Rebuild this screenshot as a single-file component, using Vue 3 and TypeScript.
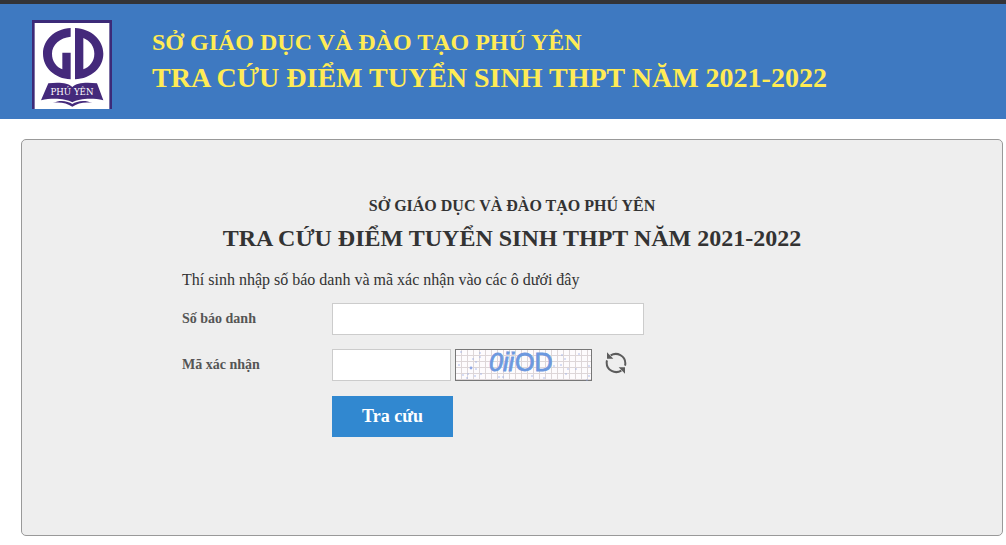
<script setup lang="ts">
import { ref } from 'vue'

const department = 'SỞ GIÁO DỤC VÀ ĐÀO TẠO PHÚ YÊN'
const title = 'TRA CỨU ĐIỂM TUYỂN SINH THPT NĂM 2021-2022'
const candidate = ref('')
const code = ref('')

interface Dot { x: number; y: number; r: number }

const dots: Dot[] = [
  [6, 3, 1], [25, 4, 1], [4, 16, 1], [18, 10, 1], [21, 13, 1], [16, 19, 2], [21, 20, 1],
  [25, 8, 1], [13, 25, 1], [12, 29, 1], [8, 26, 1], [20, 27, 1], [26, 25, 1], [48, 28, 1],
  [44, 28, 1], [52, 3, 1], [57, 3, 1], [43, 20, 1], [77, 27, 1], [89, 29, 1], [107, 6, 1],
  [110, 10, 1], [99, 17, 1], [106, 16, 1], [111, 25, 1], [124, 5, 1], [121, 20, 1],
  [134, 17, 1], [134, 27, 1], [132, 31, 1], [113, 20, 1],
].map(([x, y, r]) => ({ x, y, r }))
</script>

<template>
  <div class="page">
    <header class="banner">
      <svg class="logo" viewBox="0 0 240 267" role="img" aria-label="GD Phú Yên">
        <rect width="240" height="267" fill="#3c2a78" />
        <rect x="8" y="9" width="224" height="258" fill="#fff" />
        <g fill="#44297b">
          <path d="M116 24C68 27 33 59 33 101C33 143 68 175 116 178V98H91V148C72 140 60 123 60 101C60 74 84 53 116 50Z" />
          <path fill-rule="evenodd" d="M129 24C178 27 214 59 214 101C214 143 178 175 129 178ZM154 54V148C174 140 187 123 187 101C187 79 174 62 154 54Z" />
          <path d="M49 190C80 186 108 188 121 201C134 188 162 186 195 190L214 241C180 233 140 236 121 247C102 236 62 233 27 241Z" />
          <path d="M63 249C84 238 108 243 121 252C134 243 158 238 181 249C158 245 137 250 121 260C105 250 84 245 63 249Z" />
        </g>
        <text x="120" y="225" text-anchor="middle" class="logo-text">PHÚ YÊN</text>
      </svg>
      <div class="banner-text">
        <p class="banner-department">{{ department }}</p>
        <p class="banner-title">{{ title }}</p>
      </div>
    </header>

    <main class="panel">
      <h2>{{ department }}</h2>
      <h1>{{ title }}</h1>
      <form class="lookup" @submit.prevent>
        <p class="hint">Thí sinh nhập số báo danh và mã xác nhận vào các ô dưới đây</p>
        <div class="row">
          <label for="candidate">Số báo danh</label>
          <input id="candidate" v-model="candidate" class="wide" type="text" />
        </div>
        <div class="row">
          <label for="code">Mã xác nhận</label>
          <input id="code" v-model="code" class="short" type="text" />
          <svg class="captcha" viewBox="0 0 137 32" role="img" aria-label="Mã xác nhận">
            <defs>
              <pattern id="grid" x="1" y="1" width="6" height="6" patternUnits="userSpaceOnUse">
                <rect width="6" height="6" fill="#fdfbfd" />
                <path d="M5.5 0V6M0 5.5H6" stroke="#ddd6d8" />
              </pattern>
            </defs>
            <rect x="0.5" y="0.5" width="136" height="31" fill="url(#grid)" stroke="#777" />
            <circle v-for="(d, i) in dots" :key="i" :cx="d.x" :cy="d.y" :r="d.r * 0.7" fill="#92a9e6" />
            <g class="captcha-text">
              <text x="34" y="22" font-style="italic">0ii</text>
              <text x="60" y="22">OD</text>
            </g>
          </svg>
          <button class="refresh" type="button" aria-label="Đổi mã xác nhận">
            <svg viewBox="0 0 66 66" fill="none" stroke="#5c5c5c" stroke-width="6">
              <path d="M17 10C36 -1 61 11 61 34C61 36 61 38 60 41" />
              <path d="M49 56C30 67 5 55 5 32C5 30 5 28 6 25" />
              <path d="M6 1L25 20H6Z" fill="#5c5c5c" stroke="none" />
              <path d="M60 65L41 46H60Z" fill="#5c5c5c" stroke="none" />
            </svg>
          </button>
        </div>
        <button class="submit" type="submit">Tra cứu</button>
      </form>
    </main>
  </div>
</template>

<style>
body {
  margin: 0;
  background: #fff;
}
</style>

<style scoped>
.page {
  font-family: "Liberation Serif", "Times New Roman", serif;
  color: #333;
}
.banner {
  display: flex;
  gap: 40px;
  padding: 16px 32px 10px;
  border-top: 4px solid #333438;
  background: #3e79c1;
  color: #ffeb55;
  font-weight: bold;
}
.logo {
  display: block;
  flex: none;
  width: 80px;
  height: 89px;
}
.logo-text {
  fill: #fff;
  font-family: "DejaVu Serif", serif;
  font-size: 26px;
  font-weight: normal;
}
.banner-text {
  padding-top: 4px;
}
.banner-text p {
  margin: 0;
}
.banner-department {
  font-size: 24px;
  line-height: 36px;
}
.banner-title {
  font-size: 28px;
  line-height: 36px;
}
.panel {
  margin: 20px 3px 9px 21px;
  padding: 56px 0 98px;
  border: 1px solid #999;
  border-radius: 5px;
  background: #eee;
}
h1,
h2 {
  margin: 0;
  text-align: center;
}
h2 {
  font-size: 16px;
  line-height: 20px;
}
h1 {
  margin-top: 8px;
  font-size: 24px;
  line-height: 28px;
}
.lookup {
  padding: 18px 160px 0;
}
.hint {
  margin: 0 0 13px;
  font-size: 16px;
  line-height: 20px;
}
.row {
  display: flex;
  align-items: center;
  margin-bottom: 14px;
}
label {
  flex: none;
  width: 150px;
  color: #555;
  font-size: 14px;
  line-height: 20px;
  font-weight: bold;
}
input {
  box-sizing: border-box;
  height: 32px;
  padding: 4px 8px;
  border: 1px solid #ccc;
  background: #fff;
  font: inherit;
}
.wide {
  width: 312px;
}
.short {
  width: 119px;
}
.captcha {
  flex: none;
  width: 137px;
  height: 32px;
  margin-left: 4px;
}
.captcha-text {
  fill: #6c98df;
  stroke: #6c98df;
  stroke-width: 0.8;
  font-family: "Liberation Sans", Arial, sans-serif;
  font-size: 25px;
}
.refresh {
  align-self: flex-start;
  width: 22px;
  height: 22px;
  margin: 3px 0 0 13px;
  padding: 0;
  border: 0;
  background: none;
  cursor: pointer;
}
.refresh svg {
  display: block;
  width: 100%;
  height: 100%;
}
.submit {
  display: block;
  margin: 15px 0 0 150px;
  padding: 0 30px;
  border: 0;
  background: #3188d0;
  color: #fff;
  font-family: inherit;
  font-size: 18px;
  font-weight: bold;
  line-height: 41px;
  cursor: pointer;
}
</style>
